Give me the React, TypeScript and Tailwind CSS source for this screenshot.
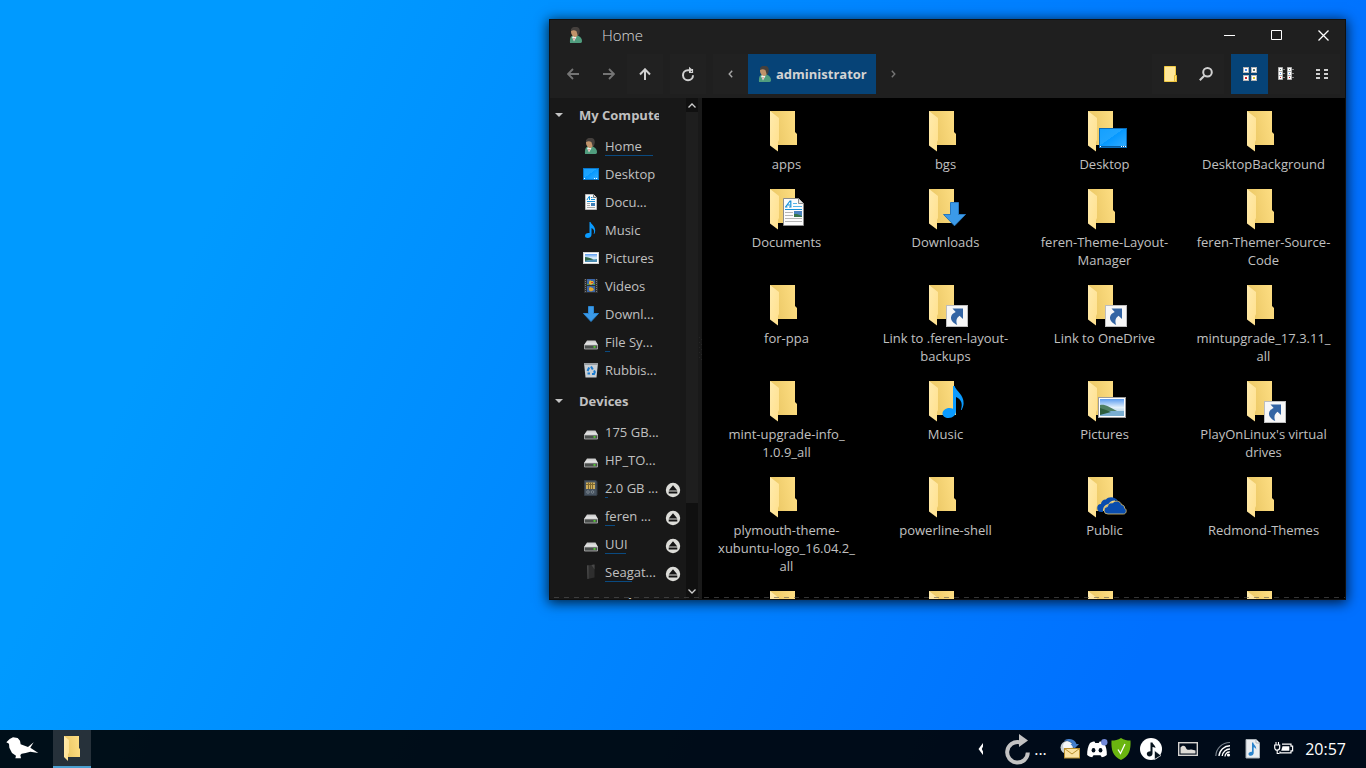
import type { ReactNode } from "react";

type Emblem = "desktop" | "documents" | "downloads" | "link" | "music" | "pictures" | "cloud";

const files: { lines: string[]; emblem?: Emblem }[] = [
  { lines: ["apps"] },
  { lines: ["bgs"] },
  { lines: ["Desktop"], emblem: "desktop" },
  { lines: ["DesktopBackground"] },
  { lines: ["Documents"], emblem: "documents" },
  { lines: ["Downloads"], emblem: "downloads" },
  { lines: ["feren-Theme-Layout-", "Manager"] },
  { lines: ["feren-Themer-Source-", "Code"] },
  { lines: ["for-ppa"] },
  { lines: ["Link to .feren-layout-", "backups"], emblem: "link" },
  { lines: ["Link to OneDrive"], emblem: "link" },
  { lines: ["mintupgrade_17.3.11_", "all"] },
  { lines: ["mint-upgrade-info_", "1.0.9_all"] },
  { lines: ["Music"], emblem: "music" },
  { lines: ["Pictures"], emblem: "pictures" },
  { lines: ["PlayOnLinux's virtual", "drives"], emblem: "link" },
  { lines: ["plymouth-theme-", "xubuntu-logo_16.04.2_", "all"] },
  { lines: ["powerline-shell"] },
  { lines: ["Public"], emblem: "cloud" },
  { lines: ["Redmond-Themes"] },
  { lines: [] },
  { lines: [] },
  { lines: [] },
  { lines: [] },
];

function Gradients() {
  return (
    <svg width="0" height="0" className="absolute" aria-hidden="true">
      <defs>
        <linearGradient id="back" x1="0.2" x2="1" y1="0.6" y2="0.4">
          <stop offset="0" stopColor="#edca68" />
          <stop offset="1" stopColor="#fddd82" />
        </linearGradient>
        <linearGradient id="flap" x1="0" x2="1" y1="0" y2="1">
          <stop offset="0" stopColor="#ffebae" />
          <stop offset="1" stopColor="#ffe08c" />
        </linearGradient>
        <linearGradient id="sky" x1="0" x2="0" y1="0" y2="1">
          <stop offset="0" stopColor="#5b9cf0" />
          <stop offset="0.5" stopColor="#e3f1fb" />
          <stop offset="1" stopColor="#8fbcd8" />
        </linearGradient>
        <linearGradient id="screen" x1="0" x2="1" y1="0" y2="1">
          <stop offset="0" stopColor="#14a0ff" />
          <stop offset="0.45" stopColor="#1fa5ff" />
          <stop offset="0.46" stopColor="#0598ff" />
          <stop offset="1" stopColor="#35adff" />
        </linearGradient>
        <linearGradient id="drive" x1="0" x2="0" y1="0" y2="1">
          <stop offset="0" stopColor="#c4c4c4" />
          <stop offset="1" stopColor="#f0f0f0" />
        </linearGradient>
      </defs>
    </svg>
  );
}

function EmblemShape({ kind }: { kind: Emblem }) {
  switch (kind) {
    case "desktop":
      return (
        <g>
          <rect x="18.5" y="17.5" width="27" height="19" fill="url(#screen)" stroke="#0a6bb8" />
          <path d="M19 35.5H45" stroke="#075a9e" />
          <path d="M19 35.5h1M40 35.5h1M42 35.5h1M44 35.5h1" stroke="#fff" />
        </g>
      );
    case "documents":
      return (
        <g>
          <path d="M20.5 9.5H35.5L40.5 14.5V36.5H20.5Z" fill="#fcfcfc" stroke="#8d8d8d" />
          <path d="M35.5 9.5V14.5H40.5" fill="#e4e4e4" stroke="#8d8d8d" />
          <path d="M22.5 18l4.500-6h.8v6M24 16h3M22 18h2.500M26 18h2.500" fill="none" stroke="#1590d8" strokeWidth="1.2" />
          <path d="M30 14.5h4M30 17.5h9" stroke="#55b5ea" />
          <path d="M22 20.5h17" stroke="#1590d8" />
          <path d="M22 23.5h8M22 26.5h8M22 29.5h17M22 32.5h17" stroke="#b5b5b5" />
          <rect x="31" y="22" width="8" height="6" fill="#4b83bf" />
          <path d="M31 25l3 0 5 2v1h-8Z" fill="#38754a" />
        </g>
      );
    case "downloads":
      return <path d="M28.5 13.5h8v12h7L32.5 36.8 21.500 25.500h7Z" fill="#3b9ae8" stroke="#2777bd" />;
    case "link":
      return (
        <g>
          <rect x="24.500" y="20.500" width="21" height="21" fill="#f7f7f7" stroke="#bdbdbd" />
          <path
            d="M30.500 23.500H41V34l-3.500-3.200c-3 2.300-3.800 4.800-2.300 9.200-4.200-2-6.500-4.800-6.200-7.700.3-2.500 2.200-4.300 4.700-5.300Z"
            fill="#3465a4"
          />
        </g>
      );
    case "music":
      return (
        <path
          d="M31 5h1.600c1.200 5 9.400 8.500 9 17.500-.1 2.500-1 4.700-2 6.500h-.7c1.900-6 .9-10.500-4.900-13V30c0 4-3 7-7.500 7-3.500 0-6-1.800-6-4.500 0-3 3-5.500 7-5.500 1.300 0 2.500.2 3.500.7Z"
          fill="#0a9bff"
        />
      );
    case "pictures":
      return (
        <g>
          <rect x="17.500" y="16.500" width="27" height="20" fill="#fff" stroke="#9c9c9c" />
          <rect x="19" y="18" width="24" height="17" fill="url(#sky)" />
          <path d="M19 24c5-1 9 2 17 6H19Z" fill="#4f7f62" />
          <path d="M19 30h24v5H19Z" fill="#79add0" />
          <path d="M19 27l6 2 5 2-11 3Z" fill="#2c5d3c" />
        </g>
      );
    case "cloud":
      return (
        <g fill="#0a4dae">
          <path d="M22 35h-1.500a4 4 0 0 1-.5-8 4.500 4.500 0 0 1 5-4.500c2-3 9-3.500 12 1.500-5-1.500-8 .5-9.500 3-4 .5-6 4-5.500 8Z" />
          <path
            d="M27 37a3.700 3.700 0 0 1-.5-7.400c.4-3 3-4.200 5-3.600 2-2.800 8-2.500 9 1.800 2 .1 3.300 1.600 3 3.400 2.600.8 2.200 5.800-1 5.800Z"
            stroke="#e6c976"
            strokeWidth="0.800"
          />
        </g>
      );
  }
}

function FolderIcon({ emblem }: { emblem?: Emblem }) {
  return (
    <svg width="47" height="40" viewBox="0 0 47 40" className="block shrink-0 overflow-visible" aria-hidden="true">
      <path d="M7 0H32V21L34 23V34H7Z" fill="url(#back)" />
      <path d="M7 0L16 7V29L15 31V40.500L7 34.500Z" fill="url(#flap)" />
      {emblem && <EmblemShape kind={emblem} />}
    </svg>
  );
}

function Person() {
  return (
    <svg width="16" height="16" viewBox="0 0 16 16" aria-hidden="true">
      <path d="M2 16c-.2-4 0-7 3.500-7.500l4-.2c3 1.500 4.500 3.500 4.500 5.700 0 1.200-.5 2-1.500 2Z" fill="#509d7e" />
      <path d="M4 10l2.500-1.500L8.500 10 6 14.500Z" fill="#f1f3ee" />
      <path d="M5.500 11l1 0L6 14Z" fill="#b4443a" />
      <path d="M3 4.500C3 2 4.500 1 7 1s4 1.500 3.700 4.500C10.300 8 9 10 7 10S3 7.500 3 4.500Z" fill="#c0936a" />
      <path d="M3 4C2.700 1.200 4.500-.2 7.500-.2s4.700 1.900 4.200 5.200c-.2 1.800-1 3.300-1.900 3.800L8.500 4.200C7 3 5 2.800 3 4Z" fill="#45403d" />
    </svg>
  );
}

function Drive() {
  return (
    <svg width="16" height="16" viewBox="0 0 16 16" aria-hidden="true">
      <path d="M4 6.500h8.500L15 11H1Z" fill="url(#drive)" />
      <path d="M1.500 11h13v4h-13Z" fill="#4a4e4c" stroke="#b8b8b8" strokeWidth="0.800" />
      <rect x="10.500" y="12.200" width="2" height="1.500" fill="#55e62d" />
    </svg>
  );
}

type PlaceIcon =
  | "home" | "desktop" | "documents" | "music" | "pictures" | "videos"
  | "downloads" | "drive" | "trash" | "card" | "seagate";

function PlaceGlyph({ kind }: { kind: PlaceIcon }) {
  if (kind === "home") return <Person />;
  if (kind === "drive") return <Drive />;
  return (
    <svg width="16" height="16" viewBox="0 0 16 16" aria-hidden="true">
      {kind === "desktop" && (
        <g>
          <rect x="0.500" y="2.500" width="15" height="11" fill="url(#screen)" stroke="#0a78cc" />
          <path d="M1 12.500h1M11 12.500h1M13 12.500h1" stroke="#fff" />
        </g>
      )}
      {kind === "documents" && (
        <g>
          <path d="M2.500.5H10.500L13.500 3.500V15.500H2.500Z" fill="#fafafa" stroke="#bbb" />
          <path d="M10.500.5V3.500H13.500" fill="#ddd" stroke="#777" />
          <path d="M4 6l2-3.500h.5V6M8 3.500h1.500M8 5.500h4M4 7.500h8" fill="none" stroke="#1590d8" />
          <path d="M4 9.500h3M4 11.500h3M4 13.500h8" stroke="#aaa" />
          <rect x="8" y="9" width="4" height="3" fill="#3f7fb8" />
        </g>
      )}
      {kind === "music" && (
        <path
          d="M6.500 0h1c.7 2.500 4.800 4 4.700 8.500 0 1.400-.4 2.600-1 3.500h-.5c.8-2.800.4-4.900-2.200-6v6.500C8.500 14.700 7 16 4.800 16 3 16 2 15 2 13.700c0-1.600 1.500-2.800 3.300-2.800.5 0 .9.100 1.200.2Z"
          fill="#0a9bff"
        />
      )}
      {kind === "pictures" && (
        <g>
          <rect x="0.500" y="2.500" width="15" height="11" fill="#fff" stroke="#d0d0d0" />
          <rect x="2" y="4" width="12" height="8" fill="url(#sky)" />
          <path d="M2 7c3 0 5 1 9 2.500L2 11Z" fill="#2f6547" />
          <path d="M2 11l12-2v3H2Z" fill="#4b8db3" />
        </g>
      )}
      {kind === "videos" && (
        <g>
          <rect x="1" y="1" width="14" height="14" fill="#303030" />
          <path d="M2.500 1v14M13.500 1v14" stroke="#777" strokeDasharray="1 1" />
          <rect x="4" y="1" width="8" height="6" fill="#3a66a8" />
          <rect x="4" y="8" width="8" height="6" fill="#3a66a8" />
          <path d="M6 4l1-2 1 1 2 0 1 2-3 2-2-1Z" fill="#e5b52d" />
          <path d="M8 4h2v1H8ZM7 11h3v1H7Z" fill="#d8402f" />
          <path d="M6 10l1-1 3 1 1 2-3 1.500-2-1Z" fill="#dfa42c" />
          <path d="M4 6h2v1H4ZM10 6h2v1h-2Z" fill="#53a645" />
        </g>
      )}
      {kind === "downloads" && (
        <path d="M5.500.5h5v7h5L8 15.500.5 7.500h5Z" fill="#3b9ae8" stroke="#2b86d2" />
      )}
      {kind === "trash" && (
        <g>
          <path d="M1 1h14l-1.500 14.500h-11Z" fill="#c9ced2" />
          <path d="M1 1h14v2H1Z" fill="#989da1" />
          <path d="M8 4.500l1.800 3M6.200 5.500L4.500 9M4.500 11.500H7M11 8.500l.8 1.500-.8 2H9" fill="none" stroke="#1a7bd0" strokeWidth="2" />
        </g>
      )}
      {kind === "card" && (
        <g>
          <path d="M1.500.5h11l1.500 1v13.500l-1 .5h-11.500Z" fill="#46525f" stroke="#343d47" />
          <rect x="3" y="2.500" width="9" height="6.500" fill="#cfae5c" />
          <path d="M3 4.500h9M5.500 2.500v6.500M7.500 2.500v6.500M9.500 2.500v6.500" stroke="#7d672f" />
          <circle cx="5" cy="12" r="1.300" fill="none" stroke="#8d969e" strokeWidth="0.700" />
          <circle cx="9.500" cy="12" r="1.300" fill="none" stroke="#8d969e" strokeWidth="0.700" />
        </g>
      )}
      {kind === "seagate" && (
        <g>
          <path d="M4 1.500L11.500.5V13.500L4.500 15Z" fill="#2e2e2e" />
          <path d="M4 1.500L5.500 1.200v13.500L4.500 15Z" fill="#4a4a4a" />
          <path d="M8.500 1l3-.5v5Z" fill="#484848" />
        </g>
      )}
    </svg>
  );
}

type Place = { name: string; icon: PlaceIcon; used?: number; eject?: boolean };

const computer: Place[] = [
  { name: "Home", icon: "home", used: 48 },
  { name: "Desktop", icon: "desktop" },
  { name: "Docu...", icon: "documents" },
  { name: "Music", icon: "music" },
  { name: "Pictures", icon: "pictures" },
  { name: "Videos", icon: "videos" },
  { name: "Downl...", icon: "downloads" },
  { name: "File Sy...", icon: "drive", used: 5 },
  { name: "Rubbis...", icon: "trash" },
];

const devices: Place[] = [
  { name: "175 GB...", icon: "drive" },
  { name: "HP_TO...", icon: "drive" },
  { name: "2.0 GB ...", icon: "card", used: 3, eject: true },
  { name: "feren ...", icon: "drive", used: 10, eject: true },
  { name: "UUI", icon: "drive", used: 21, eject: true },
  { name: "Seagat...", icon: "seagate", used: 27, eject: true },
];

function SectionTitle({ children }: { children: ReactNode }) {
  return (
    <button className="flex h-[34px] w-full shrink-0 items-center pl-[5px] text-left font-bold">
      <svg width="8" height="4" viewBox="0 0 8 4" aria-hidden="true">
        <path d="M0 0h8L4 4Z" fill="#c4c4c4" />
      </svg>
      <span className="ml-4 w-20 overflow-hidden whitespace-nowrap">{children}</span>
    </button>
  );
}

function PlaceRow({ place }: { place: Place }) {
  return (
    <li className="flex h-7 items-start pr-[5px] pl-[33px]">
      <a href="#" className="flex flex-1 items-start">
        <span className="mt-1.5">
          <PlaceGlyph kind={place.icon} />
        </span>
        <span className="ml-1.5 mt-[5px] block whitespace-nowrap">
          {place.name}
          {place.used && <span className="block h-px bg-[#0a4a80]" style={{ width: place.used }} />}
        </span>
      </a>
      {place.eject && (
        <button aria-label={"Eject " + place.name} className="mt-2">
          <svg width="16" height="16" viewBox="0 0 16 16" className="block" aria-hidden="true">
            <circle cx="8" cy="8" r="7.200" fill="#dcdcd8" />
            <path d="M8 3.200L12.300 8.400H3.700ZM3.700 9.600h8.600v1.800H3.700Z" fill="#141414" />
          </svg>
        </button>
      )}
    </li>
  );
}

function ToolButton({ label, active, children }: { label: string; active?: boolean; children: ReactNode }) {
  return (
    <button
      aria-label={label}
      className={
        active
          ? "flex h-10 w-[37px] items-center justify-center bg-[#064377] text-[#d0d0d0]"
          : "flex h-10 w-9 items-center justify-center text-[#d0d0d0]"
      }
    >
      {children}
    </button>
  );
}

function TitleBar() {
  return (
    <header className="flex h-[30px] shrink-0 items-center">
      <span className="ml-[18px]">
        <Person />
      </span>
      <h1 className="ml-[18px] flex-1 text-[15px] font-light text-[#dcdcdc]">Home</h1>
      <div className="flex gap-1">
        <button aria-label="Minimise" className="flex h-[29px] w-[43px] items-center justify-center">
          <svg width="11" height="11" viewBox="0 0 11 11" aria-hidden="true"><path d="M0 5.500h11" stroke="#fff" /></svg>
        </button>
        <button aria-label="Maximise" className="flex h-[29px] w-[43px] items-center justify-center">
          <svg width="11" height="11" viewBox="0 0 11 11" aria-hidden="true"><path d="M.5.5h10v9h-10Z" fill="none" stroke="#fff" /></svg>
        </button>
        <button aria-label="Close" className="flex h-[29px] w-[43px] items-center justify-center">
          <svg width="11" height="11" viewBox="0 0 11 11" aria-hidden="true"><path d="M.5.5l10 10M10.500.5l-10 10" stroke="#fff" strokeWidth="1.300" /></svg>
        </button>
      </div>
    </header>
  );
}

function Toolbar() {
  return (
    <nav aria-label="Toolbar" className="flex h-12 shrink-0 items-center px-[5px]">
      <div className="flex">
        <button aria-label="Back" disabled className="flex h-10 w-9 items-center justify-center text-[#757575]">
          <svg width="12" height="12" viewBox="0 0 12 12" aria-hidden="true"><path d="M12 6H1.500M6 1L1 6l5 5" fill="none" stroke="currentColor" strokeWidth="1.800" /></svg>
        </button>
        <button aria-label="Forward" disabled className="flex h-10 w-9 items-center justify-center text-[#757575]">
          <svg width="12" height="12" viewBox="0 0 12 12" aria-hidden="true"><path d="M0 6h10.500M6 1l5 5-5 5" fill="none" stroke="currentColor" strokeWidth="1.800" /></svg>
        </button>
        <div className="bg-[#212121]">
          <ToolButton label="Up">
            <svg width="12" height="12" viewBox="0 0 12 12" aria-hidden="true"><path d="M6 12V1.500M1 6.500L6 1.300l5 5.200" fill="none" stroke="currentColor" strokeWidth="2" /></svg>
          </ToolButton>
        </div>
      </div>
      <div className="ml-[7px] bg-[#212121]">
        <ToolButton label="Reload">
          <svg width="14" height="16" viewBox="0 0 14 16" aria-hidden="true">
            <path d="M9 4.200H6.800A5 5 0 1 0 12 9.200" fill="none" stroke="currentColor" strokeWidth="2" />
            <path d="M8 0.800v6.400L11.800 4Z" fill="currentColor" />
            <path d="M11.500 3v3.500H8" fill="none" stroke="currentColor" strokeWidth="1.200" />
          </svg>
        </ToolButton>
      </div>
      <div className="ml-[7px] flex flex-1">
        <button aria-label="Previous folder" className="flex h-10 w-[35px] items-center justify-center bg-[#212121] text-[#a8a8a8]">
          <svg width="5" height="8" viewBox="0 0 5 8" aria-hidden="true"><path d="M4.200.8L1.200 4l3 3.200" fill="none" stroke="currentColor" strokeWidth="1.400" /></svg>
        </button>
        <button className="flex h-10 items-center gap-[3px] bg-[#064377] px-[9px] font-bold text-[#d3d3d3]">
          <Person />
          administrator
        </button>
        <button aria-label="Next folder" className="flex h-10 w-[35px] items-center justify-center text-[#757575]">
          <svg width="5" height="8" viewBox="0 0 5 8" aria-hidden="true"><path d="M.8.8l3 3.200-3 3.200" fill="none" stroke="currentColor" strokeWidth="1.400" /></svg>
        </button>
      </div>
      <div className="flex bg-[#212121]">
        <ToolButton label="New folder">
          <svg width="14" height="16" viewBox="0 0 14 16" aria-hidden="true">
            <path d="M1.500.5h11v9l1 .5v5.500h-12Z" fill="#ffe799" stroke="#f2cb43" />
            <path d="M11.500 15.500v-6h2v6Z" fill="#ffe07a" stroke="#e9bd35" />
          </svg>
        </ToolButton>
        <ToolButton label="Search">
          <svg width="14" height="14" viewBox="0 0 14 14" aria-hidden="true">
            <circle cx="8.500" cy="5.300" r="4.300" fill="none" stroke="currentColor" strokeWidth="2" />
            <path d="M5.300 8.700L.8 13.200" stroke="currentColor" strokeWidth="2" />
          </svg>
        </ToolButton>
      </div>
      <div className="ml-[7px] flex bg-[#212121]">
        <ToolButton label="Icon view" active>
          <svg width="14" height="14" viewBox="0 0 14 14" aria-hidden="true">
            <g fill="#fff" stroke="#b5b5b5">
              <rect x="0.500" y="0.500" width="5" height="5" /><rect x="8.500" y="0.500" width="5" height="5" />
              <rect x="0.500" y="8.500" width="5" height="5" /><rect x="8.500" y="8.500" width="5" height="5" />
            </g>
            <rect x="2" y="2" width="2" height="2" fill="#4d88e8" /><rect x="10" y="2" width="2" height="2" fill="#5d7770" />
            <rect x="2" y="10" width="2" height="2" fill="#cb2027" /><rect x="10" y="10" width="2" height="2" fill="#d8c82a" />
          </svg>
        </ToolButton>
        <ToolButton label="List view">
          <svg width="16" height="14" viewBox="0 0 16 14" aria-hidden="true">
            <g fill="#fff" stroke="#b0b0b0">
              <path d="M.5.500h4v4h-4ZM.5 4.500h4v4h-4ZM.5 8.500h4v4h-4ZM9.500.500h4v4h-4ZM9.500 4.500h4v4h-4ZM9.500 8.500h4v4h-4Z" />
            </g>
            <path d="M2 2.500h1M11 2.500h1" stroke="#5d7770" />
            <path d="M2 6.500h1M11 6.500h1" stroke="#4d88e8" />
            <path d="M2 10.500h1M11 10.500h1" stroke="#cb2027" />
            <path d="M5 2.500h2M5 6.500h2M5 10.500h2M14 2.500h2M14 6.500h2M14 10.500h2" stroke="#888" />
          </svg>
        </ToolButton>
        <ToolButton label="Compact view">
          <svg width="12" height="10" viewBox="0 0 12 10" aria-hidden="true">
            <path d="M0 1h4M8 1h4M0 5h4M8 5h4M0 9h4M8 9h4" stroke="currentColor" strokeWidth="2" />
          </svg>
        </ToolButton>
      </div>
    </nav>
  );
}

function Sidebar() {
  return (
    <aside className="flex w-[152px] shrink-0 overflow-hidden bg-[#181818]">
      <div className="w-[136px] overflow-hidden">
        <SectionTitle>My Computer</SectionTitle>
        <ul>{computer.map((p) => <PlaceRow key={p.name} place={p} />)}</ul>
        <SectionTitle>Devices</SectionTitle>
        <ul>{devices.map((p) => <PlaceRow key={p.name} place={p} />)}</ul>
        <SectionTitle>Network</SectionTitle>
      </div>
      <div className="flex w-3 flex-col bg-[#101010]">
        <button aria-label="Scroll up" className="flex h-3.5 items-center justify-center">
          <svg width="8" height="5" viewBox="0 0 8 5" aria-hidden="true"><path d="M.5 4.500L4 1l3.500 3.500" fill="none" stroke="#d0d0d0" strokeWidth="1.300" /></svg>
        </button>
        <div className="flex flex-1 flex-col">
          <div className="h-[83%] bg-[#1e1e1e]" />
        </div>
        <button aria-label="Scroll down" className="flex h-4 items-center justify-center">
          <svg width="8" height="5" viewBox="0 0 8 5" aria-hidden="true"><path d="M.5.500L4 4l3.500-3.500" fill="none" stroke="#d0d0d0" strokeWidth="1.300" /></svg>
        </button>
      </div>
      <div className="flex w-1 items-center bg-[#191919]">
        <svg width="4" height="26" viewBox="0 0 4 26" aria-hidden="true">
          <path d="M1.500 1v24M3.500 3v22" stroke="#262626" strokeDasharray="1 4" />
        </svg>
      </div>
    </aside>
  );
}

function FileManager() {
  return (
    <section
      aria-label="Home"
      className="absolute top-[19px] right-5 bottom-[130px] left-[549px] flex flex-col overflow-hidden border border-[#101010] bg-[#1f1f1f] shadow-[0_2px_12px_1px_rgba(0,0,0,0.75)]"
    >
      <TitleBar />
      <Toolbar />
      <div className="flex min-h-0 flex-1">
        <Sidebar />
        <div className="min-w-0 flex-1 overflow-hidden bg-black pt-[13px] pr-0.5 pl-[5px]">
          <div className="grid grid-cols-4 gap-y-4">
            {files.map((f, i) => (
              <a key={i} href="#" className="flex flex-col items-center gap-1 text-center">
                <FolderIcon emblem={f.emblem} />
                {f.lines.length > 0 && (
                  <span>
                    {f.lines.map((l) => (
                      <span key={l} className="block whitespace-nowrap">{l}</span>
                    ))}
                  </span>
                )}
              </a>
            ))}
          </div>
        </div>
      </div>
      <div className="absolute right-0 bottom-px left-1 h-px bg-[repeating-linear-gradient(90deg,#55555599_0_5px,transparent_5px_10px)]" />
    </section>
  );
}

function Taskbar() {
  return (
    <footer className="flex h-[38px] shrink-0 items-center bg-black/90 text-white">
      <button aria-label="Start menu" className="w-[53px]">
        <svg width="44" height="38" viewBox="0 15 132 114" aria-hidden="true">
          <path
            d="M19 52l10-10 10-5 14 2 7 8 2 11 22 8 17-14-10 16 24 16-24-4-14 4-12 2-4 4 2 10H46l2-8-12-8-8-16-1-12Z"
            fill="#fff"
          />
        </svg>
      </button>
      <button aria-label="Files" className="flex h-[38px] w-[38px] items-center justify-center border-b-2 border-[#4a9fd0] bg-[#26313a]">
        <svg width="18" height="26" viewBox="0 0 18 26" aria-hidden="true">
          <path d="M1 1h15v12l1 1v8H1Z" fill="url(#back)" />
          <path d="M1 1l5 4v13l-1 1v7l-4-4Z" fill="url(#flap)" />
        </svg>
      </button>
      <div className="flex-1" />
      <button aria-label="Show hidden icons" className="flex w-[38px] items-center justify-center">
        <svg width="7" height="12" viewBox="0 0 7 12" aria-hidden="true"><path d="M5 0L.5 6 5 12V8.500L3.800 6 5 3.500Z" fill="#fff" /></svg>
      </button>
      <button aria-label="Updating" className="flex w-14 items-center gap-0.5 pl-1">
        <svg width="28" height="32" viewBox="0 0 28 32" aria-hidden="true">
          <path d="M15.500 9.200A10.300 10.300 0 1 0 23.800 19.500" fill="none" stroke="#c3c3c3" strokeWidth="4" />
          <path d="M15 1v13l9-6.500Z" fill="#c3c3c3" />
        </svg>
        <span className="text-base leading-5">...</span>
      </button>
      <button aria-label="Mail" className="flex w-7 items-center justify-center">
        <svg width="20" height="20" viewBox="0 0 20 20" aria-hidden="true">
          <circle cx="7" cy="8.500" r="6.500" fill="#c6d0d6" />
          <circle cx="7.500" cy="7" r="4.500" fill="#f4f7f9" />
          <path d="M4 2C7-1.500 15-.5 16.500 5h2.500L14.500 9.500l-4-4.500h2C11 2.500 7 1 4 2Z" fill="#427ecb" />
          <rect x="4.500" y="9.500" width="15" height="9.500" fill="#fbe2a0" stroke="#b9902e" />
          <path d="M4.500 9.500L12 15l7.500-5.500" fill="none" stroke="#b9902e" />
        </svg>
      </button>
      <button aria-label="Discord" className="flex w-[26px] items-center justify-center">
        <svg width="22" height="20" viewBox="0 0 22 20" aria-hidden="true">
          <path d="M4 4c2-1.300 3.500-1.500 4.500-1.500L9.300 4h3.400l1-1.500C15 2.500 16.500 3 18 4c2.200 3.500 3 7.500 2.800 12-2 1.500-3.800 2.200-5 2.300l-1.300-2h-7l-1.300 2C5 18.200 3 17.500 1.200 16 1 11.500 2 7 4 4Z" fill="#fff" />
          <ellipse cx="7.500" cy="11.300" rx="1.900" ry="2.200" fill="#000d1b" />
          <ellipse cx="14.500" cy="11.300" rx="1.900" ry="2.200" fill="#000d1b" />
          <circle cx="18.300" cy="3.200" r="3.200" fill="#7289da" />
        </svg>
      </button>
      <button aria-label="Security" className="flex w-[22px] items-center justify-center">
        <svg width="20" height="22" viewBox="0 0 20 22" aria-hidden="true">
          <path d="M10 0c3 2 6 2.500 9.500 2.500C20 12 18 18.500 10 22 2 18.500 0 12 .5 2.500 4 2.500 7 2 10 0Z" fill="#6ab610" />
          <path d="M7 11.500L9.500 15.500 14 6" fill="none" stroke="#fff" strokeWidth="1.300" />
        </svg>
      </button>
      <button aria-label="Media player" className="flex w-[38px] items-center justify-center">
        <svg width="22" height="22" viewBox="0 0 22 22" aria-hidden="true">
          <circle cx="11" cy="11" r="11" fill="#fff" />
          <path d="M10.500 4.500h2c.3 2 2.800 2.500 3 5.500-1-.8-2-1-3-1v6.500c0 1.700-1.500 3-3 3s-2.700-1.200-2.700-2.700 1.500-2.500 3.700-2.500Z" fill="#07131d" />
          <path d="M14.500 12.500l6.500 5-6.500 4Z" fill="#07131d" stroke="#fff" strokeWidth="0.600" />
        </svg>
      </button>
      <button aria-label="Wallpaper" className="flex w-9 items-center justify-center">
        <svg width="20" height="14" viewBox="0 0 20 14" aria-hidden="true">
          <rect x="0.700" y="0.700" width="18.600" height="12.600" fill="none" stroke="#d5d3d0" strokeWidth="1.400" />
          <path d="M2.500 5.500c2-2.500 4.500-2 5.500.5 1 2.300 3 2 4.500 1.500 2-.5 3.500.8 5 1v3h-15Z" fill="#dedbd6" />
        </svg>
      </button>
      <button aria-label="Wi-Fi" className="flex w-[34px] items-center justify-center">
        <svg width="16" height="16" viewBox="0 0 16 16" aria-hidden="true">
          <path d="M.8 15A14 14 0 0 1 15 1.500" fill="none" stroke="#77808a" strokeWidth="1.200" />
          <path d="M4 15A11 11 0 0 1 15 4.800M7.200 15A8 8 0 0 1 15 8" fill="none" stroke="#fff" strokeWidth="1.400" />
          <path d="M10 15.500a4.500 4.500 0 0 1 4.800-4.500" fill="none" stroke="#fff" strokeWidth="1.300" />
          <circle cx="13.500" cy="14" r="1.600" fill="#fff" />
        </svg>
      </button>
      <button aria-label="Sound" className="flex w-[26px] items-center justify-center">
        <svg width="16" height="20" viewBox="0 0 16 20" aria-hidden="true">
          <path d="M1 .5h10L14.500 4v15H1Z" fill="#e9edf1" stroke="#aab2b9" />
          <path d="M11 .500V4h3.500" fill="#fff" stroke="#aab2b9" />
          <path d="M7 3.500h1.200c.3 2.500 3.300 3 3 7-.7-1.600-1.500-2-2.500-2.200V14c0 1.600-1.300 2.700-3 2.700-1.400 0-2.200-.8-2.200-1.800 0-1.500 1.800-2.500 3.500-2.200Z" fill="#2a83cb" />
        </svg>
      </button>
      <button aria-label="Power" className="flex w-9 items-center justify-center">
        <svg width="20" height="16" viewBox="0 0 20 16" aria-hidden="true">
          <path d="M2 1v3M4.500 1v3M3.200 9v3.500H5.500" fill="none" stroke="#fff" strokeWidth="1.100" />
          <path d="M.7 4h5v2.500c0 1.700-1 2.700-2.500 2.700S.7 8.200.7 6.500Z" fill="none" stroke="#fff" strokeWidth="1.200" />
          <path d="M8 3.200h9v2h1.600v4.600H17v2H6v-1.300" fill="none" stroke="#fff" strokeWidth="1.200" />
          <path d="M8.500 5.200h6.800v4.600H7.200Z" fill="#fff" />
        </svg>
      </button>
      <time className="mr-5 ml-[3px] text-base leading-5">20:57</time>
    </footer>
  );
}

export default function App() {
  return (
    <div className="flex h-screen flex-col overflow-hidden bg-[linear-gradient(115deg,#009aff_18%,#0070ff_84%)] font-['Open_Sans','Noto_Sans',sans-serif] text-[13px] leading-[18px] text-[#c0c0c0]">
      <Gradients />
      <main className="relative min-h-0 flex-1">
        <FileManager />
      </main>
      <Taskbar />
    </div>
  );
}
